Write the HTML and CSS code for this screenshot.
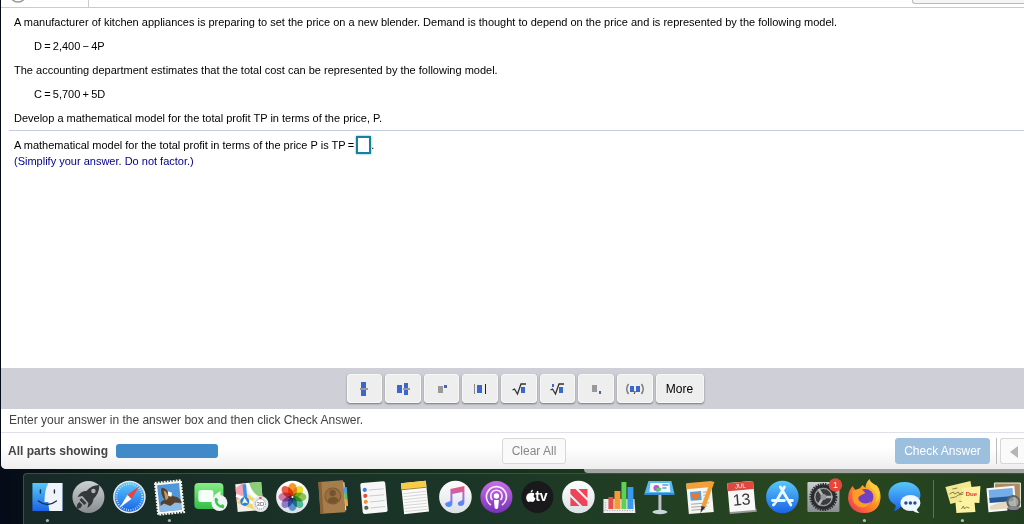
FILE: index.html
```
<!DOCTYPE html>
<html lang="en">
<head>
    <meta charset="UTF-8">
    <meta name="viewport" content="width=device-width, initial-scale=1.0">
    <title>Homework</title>
    <link rel="stylesheet" href="styles.css">
</head>
<body>
    <div class="window">
        <header class="top">
            <div class="top-left">
                <svg width="20" height="7" viewBox="0 0 20 7"><circle cx="10" cy="-6" r="8" fill="none" stroke="#999" stroke-width="1.5"/></svg>
            </div>
            <div class="top-right"></div>
        </header>

        <main class="content">
            <section class="problem">
                <p>A manufacturer of kitchen appliances is preparing to set the price on a new blender. Demand is thought to depend on the price and is represented by the following model.</p>
                <p class="equation">D&thinsp;=&thinsp;2,400&thinsp;−&thinsp;4P</p>
                <p>The accounting department estimates that the total cost can be represented by the following model.</p>
                <p class="equation">C&thinsp;=&thinsp;5,700&thinsp;+&thinsp;5D</p>
                <p>Develop a mathematical model for the total profit TP in terms of the price, P.</p>
            </section>
            <section class="question">
                <div class="answer-line"><label for="answer">A mathematical model for the total profit in terms of the price P is TP&thinsp;=</label><input type="text" id="answer" class="answer">.</div>
                <p class="hint">(Simplify your answer. Do not factor.)</p>
            </section>
        </main>

        <div class="palette">
            <div class="keys">
                <button class="key" aria-label="Fraction"><svg width="28" height="20" viewBox="0 0 28 20"><path fill="#3b66cc" d="M11 3h5v14h-5z"/><path fill="#999" d="M10 9h8v2h-8z"/></svg></button>
                <button class="key" aria-label="Mixed number"><svg width="28" height="20" viewBox="0 0 28 20"><path fill="#3b66cc" d="M8 6h5v8H8zM15 4h4v12h-4z"/><path fill="#999" d="M14 9h7v2h-7z"/></svg></button>
                <button class="key" aria-label="Exponent"><svg width="28" height="20" viewBox="0 0 28 20"><path fill="#999" d="M10 7h5v7h-5z"/><path fill="#3b66cc" d="M16 6h3v3h-3z"/></svg></button>
                <button class="key" aria-label="Absolute value"><svg width="28" height="20" viewBox="0 0 28 20"><path fill="#3b66cc" d="M11 6h5v8h-5z"/><path fill="#888" d="M8 5h1v10H8z"/><path fill="#222" d="M19 5h1v10h-1z"/></svg></button>
                <button class="key" aria-label="Square root"><svg width="28" height="20" viewBox="0 0 28 20"><path fill="none" stroke="#333" stroke-width="1.3" d="M7.500 11l2-1 3 5L16 5h5"/><path fill="#3b66cc" d="M16 8h4v6h-4z"/></svg></button>
                <button class="key" aria-label="Nth root"><svg width="28" height="20" viewBox="0 0 28 20"><path fill="none" stroke="#333" stroke-width="1.3" d="M7.500 11l2-1 3 5L16 5h5"/><path fill="#3b66cc" d="M16 8h4v6h-4zM9 5h2v3H9z"/></svg></button>
                <button class="key" aria-label="Subscript"><svg width="28" height="20" viewBox="0 0 28 20"><path fill="#999" d="M10 6h5v7h-5z"/><path fill="#3b66cc" d="M17 12h2v3h-2z"/></svg></button>
                <button class="key" aria-label="Ordered pair"><svg width="28" height="20" viewBox="0 0 28 20"><path fill="none" stroke="#777" stroke-width="1.4" d="M7.500 5Q4 10 7.500 15M20.500 5q3.500 5 0 10"/><path fill="#3b66cc" d="M9 7h4v6H9zM15 7h4v6h-4z"/><path fill="none" stroke="#222" d="M14 12q0 2-1 3"/></svg></button>
                <button class="key key-more">More</button>
            </div>
        </div>

        <p class="status">Enter your answer in the answer box and then click Check Answer.</p>

        <footer class="actions">
            <div class="parts">
                <span>All parts showing</span>
                <div class="bar"></div>
            </div>
            <button class="btn btn-clear">Clear All</button>
            <div class="right">
                <button class="btn btn-check">Check Answer</button>
                <button class="btn btn-prev" aria-label="Previous"><svg width="8" height="12" viewBox="0 0 8 12"><path fill="#b5b5b5" d="M8 0v12L0 6z"/></svg></button>
            </div>
        </footer>
    </div>

    <div class="behind"></div>

    <nav class="dock">
        <!-- Finder -->
        <svg class="app" viewBox="0 0 40 50">
            <defs>
                <linearGradient id="blue" x2="0" y2="1"><stop stop-color="#58c8fa"/><stop offset="1" stop-color="#1b63e8"/></linearGradient>
                <linearGradient id="silver" x2="0" y2="1"><stop stop-color="#ccd0d2"/><stop offset="1" stop-color="#878d90"/></linearGradient>
                <linearGradient id="white" x2="0" y2="1"><stop stop-color="#fff"/><stop offset="1" stop-color="#dce0e4"/></linearGradient>
                <linearGradient id="purple" x2="0" y2="1"><stop stop-color="#c86ee8"/><stop offset="1" stop-color="#7633b8"/></linearGradient>
                <linearGradient id="green" x2="0" y2="1"><stop stop-color="#86ee86"/><stop offset="1" stop-color="#32bd4a"/></linearGradient>
                <linearGradient id="note" x2="0" y2="1"><stop stop-color="#f65363"/><stop offset=".5" stop-color="#a66ee8"/><stop offset="1" stop-color="#3b93fa"/></linearGradient>
                <linearGradient id="fire" x1="1" x2="0" y2="1"><stop stop-color="#ffe14a"/><stop offset=".5" stop-color="#ff8b22"/><stop offset="1" stop-color="#ee2860"/></linearGradient>
            </defs>
            <path fill="url(#blue)" d="M5 9h30v28H5z"/>
            <path fill="#f0f4f8" d="M21 9h14v28H22q-1-5-1-9h-4q0-12 4-19z"/>
            <path fill="none" stroke="#18324c" stroke-width="1.400" stroke-linecap="round" d="M13 16v3M27 16v3M11 27q9 7 18 0"/>
            <circle cx="20" cy="46.500" r="1.600" fill="#a5b5ac"/>
        </svg>
        <!-- Launchpad -->
        <svg class="app" viewBox="0 0 40 50">
            <circle cx="20" cy="23" r="16" fill="url(#silver)"/>
            <path fill="#34383b" d="M31 11q-8 0-13 6-5-1-9 6l5-1 6 7-1 5q6-4 6-9 6-6 6-14z"/>
            <circle cx="25" cy="17" r="2.200" fill="#aeb2b4"/>
            <path fill="#34383b" d="M13 24l5 5-2 2-5-5zM11 28l3 3-2 3-4 1 1-5z"/>
        </svg>
        <!-- Safari -->
        <svg class="app" viewBox="0 0 40 50">
            <circle cx="20" cy="23" r="16.300" fill="#e5e9ed"/>
            <circle cx="20" cy="23" r="14.800" fill="url(#blue)"/>
            <circle cx="20" cy="23" r="13" fill="none" stroke="#d8f0ff" stroke-width="2" stroke-dasharray=".7 1.600"/>
            <path fill="#f33f38" d="M30 12L18 21l4 4z"/>
            <path fill="#fff" d="M10 34l8-13 4 4z"/>
        </svg>
        <!-- Mail -->
        <svg class="app" viewBox="0 0 40 50">
            <g transform="rotate(-6 20 23)">
                <path fill="#f6f6f4" d="M7 8h26v31H7z"/>
                <path fill="none" stroke="#f6f6f4" stroke-width="2" stroke-dasharray="1.800 1.200" d="M7 7.500h26v32H7z"/>
                <path fill="#4f96da" d="M9 10h22v27H9z"/>
                <path fill="#8dbbe6" d="M9 30l8-4 14 5v6H9z"/>
                <path fill="#57402c" d="M13 13q6 1 7 8l5 2q5 1 7 7l-7-1-5 3-6-3-4 2 1-4 4-2q-4-5-2-12z"/>
                <path fill="#c29b60" d="M15 16q4 2 4 8l-3 2z"/>
                <path fill="#fff" d="M19 17l4 2-1 4-3-1z"/>
            </g>
            <circle cx="20" cy="46.500" r="1.600" fill="#a5b5ac"/>
        </svg>
        <!-- FaceTime -->
        <svg class="app" viewBox="0 0 40 50">
            <rect x="4" y="9" width="29" height="26" rx="4" fill="url(#green)"/>
            <rect x="8" y="16" width="15" height="12" rx="2.500" fill="#f5fff5"/>
            <path fill="#f5fff5" d="M24 21l6-4v11l-6-4z"/>
            <circle cx="29" cy="29" r="8" fill="#f2f4f4"/>
            <path fill="none" stroke="#39c851" stroke-width="2.400" d="M25.500 25q0 7 7 8" stroke-linecap="round"/>
            <path stroke="#39c851" stroke-width="3" d="M25 25l2 2M31 31l2 2"/>
        </svg>
        <!-- Maps -->
        <svg class="app" viewBox="0 0 40 50">
            <g transform="rotate(-5 18 23)">
                <path fill="#f2efe6" d="M5 9h26v28H5z"/>
                <path fill="#8bcf79" d="M19 9h12v16q-9-3-12-16z"/>
                <path fill="#f3a5b5" d="M5 13l7-4h3v9l-10 8z"/>
                <path fill="#f5d766" d="M5 28l9-10 17 14v5H24z"/>
                <path fill="none" stroke="#fff" stroke-width="3" d="M5 20L31 35M17 9q2 14 14 18"/>
                <path fill="none" stroke="#3b91ec" stroke-width="3.500" d="M14 10v16"/>
                <circle cx="13" cy="27" r="4.500" fill="#2681e3"/>
                <path fill="#fff" d="M13 23l3 6-3-1-3 1z"/>
            </g>
            <circle cx="29" cy="30" r="8" fill="#e5e8ea"/>
            <circle cx="29" cy="30" r="5" fill="#fff" stroke="#72848c" stroke-dasharray="1 1"/>
            <path fill="#e44" d="M28 23h2v2h-2z"/>
            <text x="29" y="32" class="tiny">3D</text>
        </svg>
        <!-- Photos -->
        <svg class="app" viewBox="0 0 40 50">
            <circle cx="20" cy="23" r="16.300" fill="url(#white)"/>
            <g class="petals">
                <ellipse cx="20" cy="16" rx="4.600" ry="7" fill="#f5972b"/>
                <ellipse cx="20" cy="16" rx="4.600" ry="7" fill="#e6dc32" transform="rotate(45 20 23)"/>
                <ellipse cx="20" cy="16" rx="4.600" ry="7" fill="#86c651" transform="rotate(90 20 23)"/>
                <ellipse cx="20" cy="16" rx="4.600" ry="7" fill="#54b89a" transform="rotate(135 20 23)"/>
                <ellipse cx="20" cy="16" rx="4.600" ry="7" fill="#5795d1" transform="rotate(180 20 23)"/>
                <ellipse cx="20" cy="16" rx="4.600" ry="7" fill="#8f7cc4" transform="rotate(225 20 23)"/>
                <ellipse cx="20" cy="16" rx="4.600" ry="7" fill="#d07aac" transform="rotate(270 20 23)"/>
                <ellipse cx="20" cy="16" rx="4.600" ry="7" fill="#ee5b45" transform="rotate(315 20 23)"/>
            </g>
            <circle cx="20" cy="23" r="1" fill="#fff"/>
        </svg>
        <!-- Contacts -->
        <svg class="app" viewBox="0 0 40 50">
            <g transform="rotate(-4 20 23)">
                <path fill="#eee" d="M30 9h2v28h-2z"/>
                <path fill="#47a3de" d="M31 14h3v6h-3z"/><path fill="#5dbf59" d="M31 20h3v6h-3z"/><path fill="#f1a63a" d="M31 26h3v7h-3z"/>
                <rect x="6" y="7" width="25" height="32" rx="1" fill="#a77d4b"/>
                <path fill="#8b6338" d="M6 7h3v32H6z"/>
                <circle cx="19.500" cy="22" r="8" fill="#99703f" stroke="#7d5a32"/>
                <circle cx="19.500" cy="19" r="3.200" fill="#76542f"/>
                <path fill="#76542f" d="M14 27q1-4 5.500-4t5.500 4q-6 5-11 0z"/>
            </g>
        </svg>
        <!-- Reminders -->
        <svg class="app" viewBox="0 0 40 50">
            <g transform="rotate(-5 20 23)">
                <rect x="7" y="8" width="25" height="31" rx="2" fill="#f7f7f7"/>
                <circle cx="11" cy="15" r="2.100" fill="#397df0"/><circle cx="11" cy="21" r="2.100" fill="#e64d3d"/>
                <circle cx="11" cy="27" r="2.100" fill="#e99640"/><circle cx="11" cy="33" r="2.100" fill="#596066"/>
                <path stroke="#ccc" d="M15 15.500h15M15 21.500h15M15 27.500h15M15 33.500h15"/>
            </g>
        </svg>
        <!-- Notes -->
        <svg class="app" viewBox="0 0 40 50">
            <g transform="rotate(-6 20 23)">
                <path fill="#fafafa" d="M8 8h25v31H8z"/>
                <path fill="#f9cc45" d="M8 8h25v6H8z"/>
                <path fill="#a77f28" d="M8 14h25v1H8z"/>
                <path stroke="#d6d6d6" d="M9 18.500h23M9 21.500h23M9 24.500h23M9 27.500h23M9 30.500h23M9 33.500h23M9 36.500h23"/>
            </g>
        </svg>
        <!-- Music -->
        <svg class="app" viewBox="0 0 40 50">
            <circle cx="20" cy="23" r="16.300" fill="url(#white)"/>
            <path fill="url(#note)" d="M15 15l14-3v16q0 4-4 4-4-1-2-4l4-2v-8l-10 2v9q0 4-4 4-4-1-3-4l5-2z"/>
        </svg>
        <!-- Podcasts -->
        <svg class="app" viewBox="0 0 40 50">
            <circle cx="20" cy="23" r="16" fill="url(#purple)"/>
            <g fill="none" stroke="#f7e8ff" stroke-width="1.700"><path d="M14.500 31a10 10 0 1 1 11 0M16 26a5.700 5.700 0 1 1 8 0"/></g>
            <circle cx="20" cy="22" r="2.700" fill="#fff"/>
            <path fill="#fff" d="M17.500 26h5l-.8 8q-1.700 2-3.400 0z"/>
        </svg>
        <!-- TV -->
        <svg class="app" viewBox="0 0 40 50">
            <circle cx="20" cy="23" r="16" fill="#19191b"/>
            <path fill="#fff" d="M13 19q3-1 4 1-2 3 1 4-1 4-3 4-2-1-4 0-3-2-2-6 1-3 4-3zM13 18.500q0-2 2.500-3 0 3-2.500 3z"/>
            <text x="24" y="27" class="tv">tv</text>
        </svg>
        <!-- News -->
        <svg class="app" viewBox="0 0 40 50">
            <circle cx="20" cy="23" r="16.300" fill="url(#white)"/>
            <path fill="#ed4458" d="M12 15h5l12 12v5h-5L12 20zM20 15h9v9zM12 23l9 9h-9z"/>
        </svg>
        <!-- Numbers -->
        <svg class="app" viewBox="0 0 40 50">
            <path fill="#ececec" d="M4 25h31l1 14H4z"/>
            <path stroke="#aaa" stroke-dasharray="1 1.500" d="M6 28v8M5 36.500h30"/>
            <path fill="#e5504d" d="M9 23h5v12H9z"/><path fill="#f39b36" d="M15 17h6v18h-6z"/>
            <path fill="#5bd156" d="M22 8h5v27h-5z"/><path fill="#3b99ee" d="M28 13h6v22h-6z"/>
        </svg>
        <!-- Keynote -->
        <svg class="app" viewBox="0 0 40 50">
            <path fill="#b9c4ca" d="M19 19h3v18h-3z"/><ellipse cx="20.500" cy="38" rx="7.500" ry="2.200" fill="#cad4d9"/>
            <path fill="#58b9f0" d="M9 7h23l3 13H5z"/><path fill="#368acd" d="M5 19h30v2H5z"/>
            <path fill="#f5f7f8" d="M11 9h19l1 9H10z"/>
            <circle cx="17" cy="14" r="3" fill="#b75bd3"/><path fill="#63c66b" d="M17 14h5q0 4-5 4z"/><path stroke="#4ea8e0" stroke-width="1.500" d="M23 11h6M23 14h4"/>
        </svg>
        <!-- Pages -->
        <svg class="app" viewBox="0 0 40 50">
            <g transform="rotate(-5 20 23)">
                <path fill="#f7f5f1" d="M7 9h25v30H7z"/><path fill="#f2a03b" d="M7 8h25v6H7z"/>
                <path fill="#4fa3e1" d="M10 17h11v9H10z"/><path fill="#ee752c" d="M12 18l3 1 3-1 2 3-4 5-5-4z"/>
                <path stroke="#aaa" d="M23 18.500h7M23 21.500h7M23 24.500h6M10 29.500h18M10 32.500h16M10 35.500h14"/>
            </g>
            <path fill="#f2a034" d="M30 7l4 1-9 25-4-1z"/><path fill="#333" d="M21 32l4 1-5 6z"/>
        </svg>
        <!-- Calendar -->
        <svg class="app" viewBox="0 0 40 50">
            <g transform="rotate(-5 20 23)">
                <path fill="#999" d="M7 36h27v3H7z"/>
                <rect x="7" y="8" width="26" height="29" rx="1" fill="#f8f8f8"/><path fill="#dd4941" d="M7 8h26v8H7z"/>
                <text x="20" y="14" class="month">JUL</text><text x="20" y="31" class="day">13</text>
            </g>
        </svg>
        <!-- App Store -->
        <svg class="app" viewBox="0 0 40 50">
            <circle cx="20" cy="23" r="16.300" fill="url(#blue)"/>
            <g fill="none" stroke="#eef9ff" stroke-width="2.800" stroke-linecap="round"><path d="M22 13l-8.500 15M18 13l10.500 18M10 26.500h12M27 26.500h3M12 30l-1 1"/></g>
        </svg>
        <!-- System Preferences -->
        <svg class="app" viewBox="0 0 40 50">
            <rect x="4" y="8" width="32" height="30" rx="1" fill="url(#silver)"/>
            <circle cx="20" cy="23" r="13" fill="none" stroke="#2c2e30" stroke-width="2" stroke-dasharray="1.500 1"/>
            <circle cx="20" cy="23" r="11" fill="#707476" stroke="#292b2d" stroke-width="3"/>
            <circle cx="20" cy="23" r="8.500" fill="#3a3c3e" stroke="#aaa"/>
            <path stroke="#b2b5b7" stroke-width="2.500" d="M20 23h9M20 23l-5-8M20 23l-5 8"/><circle cx="20" cy="23" r="3" fill="#999"/>
            <circle cx="32" cy="11" r="6.700" fill="#e84638"/><text x="32" y="14" class="badge">1</text>
        </svg>
        <!-- Firefox -->
        <svg class="app" viewBox="0 0 40 50">
            <path fill="url(#fire)" d="M5 17l3-5 3 4q5-1 7-5l3 3q0-5 4-9 2 5 6 7l1-1q5 6 4 14-2 14-16 14-13 0-16-12-1-5 1-10z"/>
            <circle cx="21" cy="23" r="8" fill="#7141c5"/>
            <path fill="#ff9b29" d="M8 17q6-3 10-1l3 3-4 2q-5 2-2 6 6 5 12 0-4 8-12 6-7-3-7-10z"/>
            <path fill="#ffcd3b" d="M25 7q-1 6 4 9 6 7 1 13 5-3 5-9 0-5-4-9z"/>
            <circle cx="20" cy="46.500" r="1.600" fill="#a8c6a1"/>
        </svg>
        <!-- Messages -->
        <svg class="app" viewBox="0 0 40 50">
            <path fill="url(#blue)" d="M20 8c10 0 16 6 16 13s-6 13-16 13l-4-1q-3 4-7 4 3-3 2-6-7-4-7-10C4 14 10 8 20 8z"/>
            <ellipse cx="26" cy="29" rx="10" ry="8" fill="#eef7ff"/><path fill="#eef7ff" d="M27 35l5-2q0 4 3 6-5 0-8-4z"/>
            <g fill="#284c8b"><circle cx="21.500" cy="29" r="1.700"/><circle cx="26" cy="29" r="1.700"/><circle cx="30.500" cy="29" r="1.700"/></g>
        </svg>
        <div class="divider"></div>
        <!-- Stickies -->
        <svg class="app" viewBox="0 0 40 50">
            <path fill="#f3e891" d="M3 13l25-6 3 17-23 6z"/>
            <path fill="#fbf2a2" d="M20 14l18-2-1 17-18-1zM13 28l19-1 1 11-19 1z"/>
            <path fill="none" stroke="#6d6737" stroke-width=".8" d="M10 15l5-1M7 20l4-2 1 2 4-2 1 2 4-2M8 24l5-1 3-2 5-1M19 35l2-3 1 3 2-2 3 1"/>
            <text x="29" y="22" class="due">Due</text>
            <circle cx="20" cy="46.500" r="1.600" fill="#a8c6a1"/>
        </svg>
        <!-- Preview -->
        <svg class="app" viewBox="0 0 40 50">
            <path fill="#ad8b5e" stroke="#f6f0e5" d="M11 9h26v24H11z"/>
            <g transform="rotate(-5 18 25)"><path fill="#f8f8f8" d="M4 13h28v24H4z"/><path fill="#75aee6" d="M6 15h24v10H6z"/><path fill="#245793" d="M6 23h24v5H6z"/><path fill="#e3d9c2" d="M6 31l12-3 12 1v6H6z"/></g>
            <circle cx="30" cy="28" r="6" fill="#a3a6a2" fill-opacity=".8" stroke="#606466" stroke-width="2"/><path fill="#303335" d="M24 34h12v4H24z"/><ellipse cx="30" cy="34" rx="6" ry="2" fill="#85898b"/>
        </svg>
    </nav>
</body>
</html>
```
FILE: styles.css
```
* {
    box-sizing: border-box;
}

body {
    background: linear-gradient(to right, #050b18, #0d2414 15%, #16321b 50%, #294d20 85%, #203e20);
    color: #000;
    font-family: "Liberation Sans", Arial, sans-serif;
    font-size: 11px;
    display: flex;
    flex-direction: column;
    height: 100vh;
    margin: 0;
    overflow: hidden;
}

p {
    margin: 0;
}

button {
    font-family: inherit;
    padding: 0;
    cursor: pointer;
}

/* Browser window */
.window {
    background-color: #fff;
    border-bottom-left-radius: 5px;
    display: flex;
    flex: 1;
    flex-direction: column;
    margin-left: 1px;
    overflow: hidden;
}

.top {
    border-bottom: 1px solid #c9cad6;
    display: flex;
    height: 8px;
    justify-content: space-between;
}

.top-left {
    border-right: 1px solid #c9cad6;
    padding-left: 7px;
    width: 88px;
}

.top-left svg {
    display: block;
}

.top-right {
    background-color: #f5f5f5;
    border: 1px solid #bbb;
    border-width: 0 0 1px 1px;
    border-bottom-left-radius: 3px;
    height: 4px;
    width: 112px;
}

.content {
    flex: 1;
    padding-left: 8px;
}

.problem {
    border-bottom: 1px solid #c5cbdc;
    display: flex;
    flex-direction: column;
    gap: 8px;
    line-height: 16px;
    padding: 6px 5px 4px;
}

.equation {
    padding-left: 20px;
}

.question {
    line-height: 14px;
    padding: 5px;
}

.answer-line {
    display: flex;
    align-items: center;
    height: 18px;
}

.answer {
    border: 2px solid #16809e;
    box-shadow: 0 0 2px #4cb5cc;
    font-size: 11px;
    height: 18px;
    margin-left: 2px;
    outline: none;
    padding: 0;
    width: 15px;
}

.hint {
    color: #00008b;
}

/* Math palette */
.palette {
    background-color: #cfd0d7;
    display: flex;
    height: 41px;
    justify-content: center;
    align-items: center;
    padding-left: 25px;
}

.keys {
    display: flex;
    gap: 3px;
    width: 357px;
}

.key {
    background-color: #eee;
    border: 1px solid #f8f8f8;
    border-radius: 3px;
    box-shadow: 0 1px 2px #777;
    color: #000;
    display: flex;
    flex: 1;
    font-size: 12px;
    height: 29px;
    justify-content: center;
    align-items: center;
}

.key-more {
    flex: 0 0 48px;
}

.status {
    border-bottom: 1px solid #dedfe7;
    color: #444;
    font-size: 12px;
    line-height: 23px;
    padding-left: 8px;
}

/* Bottom actions */
.actions {
    background: linear-gradient(to bottom, #fff 40%, #eee);
    display: grid;
    grid-template-columns: 1fr auto 1fr;
    align-items: center;
    height: 36px;
    padding-left: 7px;
}

.parts {
    color: #444;
    display: flex;
    align-items: center;
    font-size: 12px;
    font-weight: bold;
    gap: 8px;
}

.bar {
    background-color: #408ac9;
    border-radius: 3px;
    height: 14px;
    width: 102px;
}

.btn {
    background-color: #fafafa;
    border: 1px solid #d7d7d7;
    border-radius: 3px;
    color: #888;
    font-size: 12px;
    height: 26px;
    width: 64px;
}

.btn-clear {
    margin-left: 36px;
}

.right {
    display: flex;
    justify-content: flex-end;
}

.btn-check {
    background-color: #9bbfdc;
    border-color: #9bbfdc;
    color: #fff;
    width: 95px;
}

.btn-prev {
    border-right: none;
    border-radius: 3px 0 0 3px;
    margin-left: 10px;
    padding-left: 2px;
    position: relative;
    width: 24px;
}

.btn-prev svg {
    vertical-align: middle;
}

.btn-prev::before {
    background-color: #bbb;
    content: "";
    height: 26px;
    left: -5px;
    position: absolute;
    top: -1px;
    width: 1px;
}

/* Edge of the window behind */
.behind {
    align-self: flex-end;
    background-color: #a3a5a3;
    border-bottom-left-radius: 4px;
    height: 4px;
    width: 43%;
}

/* Dock */
.dock {
    background: linear-gradient(to right, #182a28, #1b3627 45%, #29481f 80%, #213e20);
    border: 1px solid #3a5044;
    border-width: 1px 0 0 1px;
    border-top-left-radius: 4px;
    display: flex;
    height: 51px;
    margin-left: 23px;
    padding-left: 3px;
}

.app {
    flex: 1;
    height: 50px;
    min-width: 0;
}

.divider {
    background-color: #59744f;
    height: 38px;
    margin: 6px 8px;
    width: 1px;
}

.petals {
    isolation: isolate;
}

.petals ellipse {
    mix-blend-mode: multiply;
}

.tiny {
    fill: #455;
    font-size: 6px;
    text-anchor: middle;
}

.tv {
    fill: #fff;
    font-size: 14px;
    font-weight: bold;
    text-anchor: middle;
}

.month {
    fill: #fff;
    font-size: 6px;
    text-anchor: middle;
}

.day {
    fill: #333;
    font-size: 16px;
    text-anchor: middle;
}

.badge {
    fill: #fff;
    font-size: 9px;
    text-anchor: middle;
}

.due {
    fill: #e33a25;
    font-size: 6px;
    font-weight: bold;
    text-anchor: middle;
}
```
